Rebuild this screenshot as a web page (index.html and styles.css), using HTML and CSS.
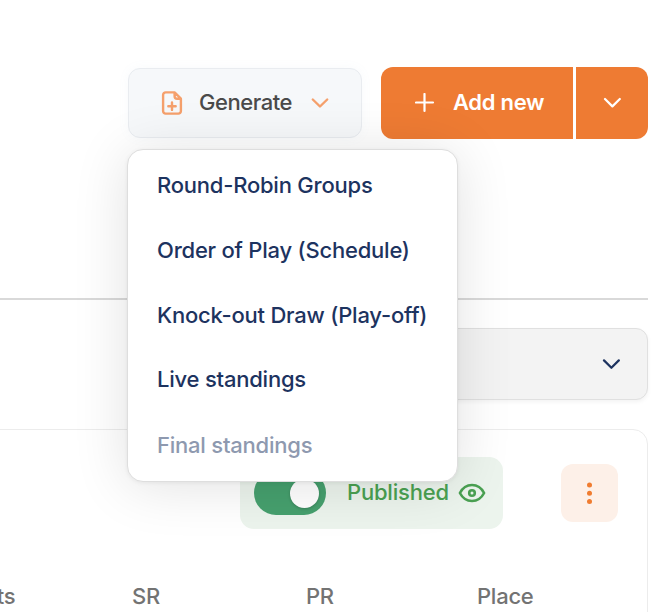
FILE: index.html
```html
<!DOCTYPE html>
<html lang="en">
<head>
<meta charset="utf-8">
<title>Groups</title>
<link rel="stylesheet" href="styles.css">
</head>
<body>
<main class="page">
  <header class="toolbar">
    <div class="dropdown">
      <button class="btn-generate">
        <svg class="icon-file" width="22" height="26" viewBox="0 0 22 26" fill="none" stroke="currentColor" stroke-width="2.4" stroke-linecap="round" stroke-linejoin="round"><path d="M13.600 2.400H4.600a2.500 2.500 0 0 0-2.500 2.500v16.200a2.500 2.500 0 0 0 2.500 2.500h12.800a2.500 2.500 0 0 0 2.500-2.500V8.700L13.600 2.400V6.200a2.500 2.500 0 0 0 2.500 2.500h3.800M11 12.500v7.400M7.300 16.200h7.400"/></svg>
        <span class="label-generate">Generate</span>
        <svg width="18" height="12" viewBox="0 0 18 12" fill="none" stroke="currentColor" stroke-width="2.400" stroke-linecap="round" stroke-linejoin="round"><path d="M1.800 2.500l7.200 7 7.200-7"/></svg>
      </button>
      <ul class="menu">
        <li class="menu-item">Round-Robin Groups</li>
        <li class="menu-item">Order of Play (Schedule)</li>
        <li class="menu-item">Knock-out Draw (Play-off)</li>
        <li class="menu-item menu-item-raised">Live standings</li>
        <li class="menu-item disabled">Final standings</li>
      </ul>
    </div>
    <div class="split">
      <button class="btn-add">
        <svg width="20" height="20" viewBox="0 0 20 20" fill="none" stroke="currentColor" stroke-width="2.200" stroke-linecap="round"><path d="M9.500 1v17M1 9.500h17"/></svg>
        <span class="label-add">Add new</span>
      </button>
      <button class="btn-more">
        <svg width="18" height="12" viewBox="0 0 18 12" fill="none" stroke="currentColor" stroke-width="2.200" stroke-linecap="round" stroke-linejoin="round"><path d="M2 2l7.400 7.400L16.800 2"/></svg>
      </button>
    </div>
  </header>
  <hr class="rule">
  <div class="select">
    <svg width="18" height="12" viewBox="0 0 18 12" fill="none" stroke="currentColor" stroke-width="2.200" stroke-linecap="round" stroke-linejoin="round"><path d="M2 2.400l7.400 7.400 7.400-7.400"/></svg>
  </div>
  <section class="card">
    <div class="card-actions">
      <div class="published">
        <span class="toggle"><span class="knob"></span></span>
        <span class="label-published">Published</span>
        <svg width="28" height="22" viewBox="0 0 28 22" fill="none" stroke="currentColor" stroke-width="2.600" stroke-linejoin="round"><path d="M1.900 11C4.500 6 8.900 3 14 3s9.500 3 12.100 8C23.500 16 19.100 19 14 19S4.500 16 1.900 11z"/><circle cx="14" cy="11" r="2.800"/></svg>
      </div>
      <button class="kebab">
        <svg width="6" height="22" viewBox="0 0 6 22" fill="currentColor"><circle cx="2.500" cy="2.900" r="2.500"/><circle cx="2.500" cy="11.300" r="2.500"/><circle cx="2.500" cy="19.500" r="2.500"/></svg>
      </button>
    </div>
    <div class="columns">
      <span class="first">Sets</span><span>SR</span><span>PR</span><span>Place</span>
    </div>
  </section>
</main>
</body>
</html>
```
FILE: styles.css
```css
* { box-sizing: border-box; }
body {
  margin: 0;
  height: 612px;
  overflow: hidden;
  background: #fff;
  font-family: Inter, "Liberation Sans", sans-serif;
  font-size: 22px;
  font-weight: 500;
  line-height: 28px;
}
button {
  display: flex;
  align-items: center;
  border: 0;
  padding: 0;
  font: inherit;
}
svg { flex: none; display: block; }
.page { height: 612px; overflow: hidden; padding: 67px 22px 0 0; }
.toolbar {
  display: flex;
  justify-content: flex-end;
  align-items: center;
  gap: 19px;
  height: 72px;
}
.dropdown { position: relative; width: 234px; }
.btn-generate {
  width: 100%;
  height: 70px;
  padding-left: 32px;
  border: 1px solid #e9ecf0;
  border-radius: 12px;
  background: #f6f8fa;
  color: #f5a06c;
  box-shadow: 0 0 12px rgba(120, 150, 200, .05);
}
.label-generate {
  width: 93px;
  margin: 0 19px 0 16px;
  padding-bottom: 2px;
  color: #4a4a4a;
  text-align: left;
  letter-spacing: -.45px;
  white-space: nowrap;
}
.menu {
  position: absolute;
  z-index: 2;
  top: 81px;
  left: -1px;
  width: 331px;
  height: 333px;
  margin: 0;
  padding: 3px 29px;
  list-style: none;
  background: #fff;
  border: 1px solid #dedede;
  border-radius: 16px;
  box-shadow: 0 4px 56px rgba(0, 0, 0, .12), 0 1px 4px rgba(0, 0, 0, .06);
}
.menu-item {
  height: 65px;
  line-height: 65px;
  color: #1d335f;
  letter-spacing: -.22px;
  white-space: nowrap;
}
.menu-item-raised { line-height: 63px; }
.disabled { color: #8e99af; }
.split { display: flex; gap: 3px; color: #fff; }
.btn-add {
  width: 192px;
  height: 72px;
  gap: 18px;
  padding-left: 34px;
  border-radius: 12px 0 0 12px;
  background: #ee7b33;
  color: #fff;
  font-weight: 600;
  white-space: nowrap;
}
.label-add { padding-bottom: 2px; letter-spacing: -.3px; }
.btn-more {
  width: 72px;
  height: 72px;
  justify-content: center;
  border-radius: 0 12px 12px 0;
  background: #ee7b33;
  color: #fff;
}
.rule { height: 2px; margin: 159px 0 28px; border: 0; background: #d9d9d9; }
.select {
  display: flex;
  align-items: center;
  justify-content: flex-end;
  height: 72px;
  margin-left: 150px;
  padding-right: 27px;
  border: 1px solid #e0e0e0;
  border-radius: 12px;
  background: #f3f3f3;
  color: #1d335f;
  box-shadow: 0 2px 4px rgba(0, 0, 0, .05);
}
.card {
  height: 230px;
  margin: 29px 0 0 -20px;
  padding: 27px 29px 0 0;
  border: 1px solid #ececec;
  border-radius: 15px;
}
.card-actions { display: flex; align-items: center; justify-content: flex-end; gap: 58px; }
.published {
  display: flex;
  align-items: center;
  width: 263px;
  height: 72px;
  padding-left: 14px;
  border-radius: 14px;
  background: #ecf4ed;
  color: #4aa152;
}
.toggle {
  display: flex;
  align-items: center;
  justify-content: flex-end;
  width: 72px;
  height: 44px;
  padding-right: 7px;
  border-radius: 22px;
  background: #46a06e;
}
.knob { width: 29px; height: 29px; border-radius: 50%; background: #fff; box-shadow: 0 1px 3px rgba(0, 0, 0, .2); }
.label-published { width: 102px; margin: 0 9px 0 21px; padding-bottom: 2px; letter-spacing: -.2px; white-space: nowrap; }
.kebab {
  width: 57px;
  height: 58px;
  justify-content: center;
  border-radius: 12px;
  background: #fdf0e8;
  color: #f07c30;
}
.columns {
  display: grid;
  grid-template-columns: 161px 174px 171px 1fr;
  margin: 53px 0 0 -10px;
  color: #737373;
  letter-spacing: -.25px;
}
.first { margin-left: -1px; }
```
